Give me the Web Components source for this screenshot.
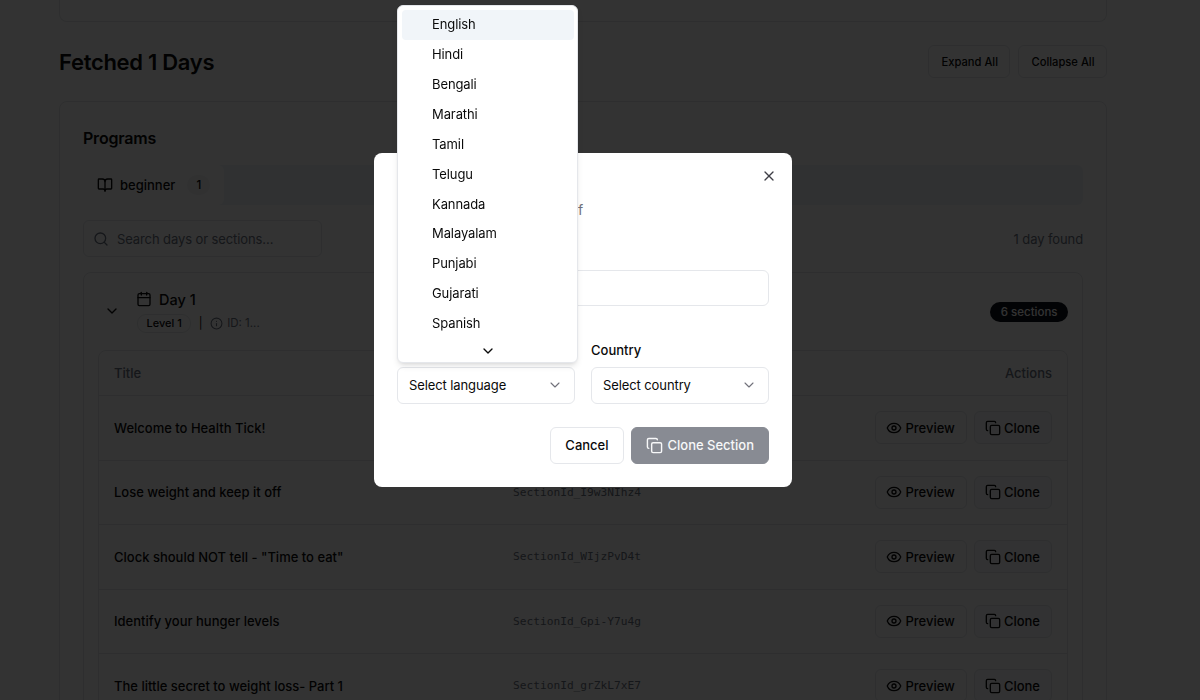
<!DOCTYPE html>
<html>
<head>
<meta charset="utf-8">
<title>Fetched Days</title>
<style>
  html, body { margin: 0; height: 100%; overflow: hidden; background: #fff; }
  body { font-family: Inter, "Liberation Sans", sans-serif; color: #0a0a0a; font-size: 13px; }
</style>
</head>
<body>
<days-page>
  <section-row title="Welcome to Health Tick!"></section-row>
  <section-row title="Lose weight and keep it off" section="SectionId_I9w3NIhz4"></section-row>
  <section-row title='Clock should NOT tell - "Time to eat"' section="SectionId_WIjzPvD4t"></section-row>
  <section-row title="Identify your hunger levels" section="SectionId_Gpi-Y7u4g"></section-row>
  <section-row title="The little secret to weight loss- Part 1" section="SectionId_grZkL7xE7"></section-row>
</days-page>
<clone-dialog></clone-dialog>

<script>
// lucide style paths, 24 box
const ICONS = {
  book: '<path d="M12 7v14"/><path d="M3 18a1 1 0 0 1-1-1V4a1 1 0 0 1 1-1h5a4 4 0 0 1 4 4 4 4 0 0 1 4-4h5a1 1 0 0 1 1 1v13a1 1 0 0 1-1 1h-6a3 3 0 0 0-3 3 3 3 0 0 0-3-3z"/>',
  search: '<circle cx="11" cy="11" r="8"/><path d="m21 21-4.3-4.3"/>',
  calendar: '<path d="M8 2v4"/><path d="M16 2v4"/><rect x="3" y="4" width="18" height="18" rx="2"/><path d="M3 10h18"/>',
  chevron: '<path d="m6 9 6 6 6-6"/>',
  info: '<circle cx="12" cy="12" r="10"/><path d="M12 16v-4"/><path d="M12 8h.01"/>',
  eye: '<path d="M2.062 12.348a1 1 0 0 1 0-.696 10.75 10.75 0 0 1 19.876 0 1 1 0 0 1 0 .696 10.75 10.75 0 0 1-19.876 0"/><circle cx="12" cy="12" r="3"/>',
  copy: '<rect x="8" y="8" width="14" height="14" rx="2"/><path d="M4 16c-1.1 0-2-.9-2-2V4c0-1.1.9-2 2-2h10c1.1 0 2 .9 2 2"/>',
  x: '<path d="M18 6 6 18"/><path d="m6 6 12 12"/>'
};

class UiIcon extends HTMLElement {
  connectedCallback() {
    const size = this.getAttribute('size') || 16;
    const sw = this.getAttribute('stroke') || 2;
    this.attachShadow({mode: 'open'}).innerHTML = `
      <style>:host { display: inline-flex; flex: none; } svg { display: block; }</style>
      <svg width="${size}" height="${size}" viewBox="0 0 24 24" fill="none" stroke="currentColor"
        stroke-width="${sw}" stroke-linecap="round" stroke-linejoin="round">${ICONS[this.getAttribute('name')]}</svg>`;
  }
}
customElements.define('ui-icon', UiIcon);

class UiButton extends HTMLElement {
  constructor() {
    super();
    this.attachShadow({mode: 'open'}).innerHTML = `
      <style>
        :host { display: inline-flex; align-items: center; justify-content: center; gap: var(--gap, 3px);
          box-sizing: border-box; height: var(--h, 33px); padding: 0 var(--pr, 11px) var(--pb, 0) var(--pl, 10px); border: 1px solid #e5e7eb;
          border-radius: 6px; background: #fff; font-size: var(--fs, 13px); font-weight: 500; color: #0a0a0a; white-space: nowrap; }
        :host([tint]) { background: #f8fafc; }
        :host([solid]) { background: #888b93; border-color: #888b93; color: #f7f8f9; }
      </style>
      <slot></slot>`;
  }
}
customElements.define('ui-button', UiButton);

class SectionRow extends HTMLElement {
  connectedCallback() {
    this.attachShadow({mode: 'open'}).innerHTML = `
      <style>
        :host { display: grid; grid-template-columns: 399px 1fr auto; align-items: center; box-sizing: border-box;
          height: 64.5px; padding: 0 15px; border-top: 1px solid #e5e7eb; }
        .title { font-size: 13px; font-weight: 500; }
        .id { font-family: "DejaVu Sans Mono", "Liberation Mono", monospace; font-size: 11.2px; color: #6b7280; }
        .actions { display: flex; gap: 7px; }
      </style>
      <div class="title"></div>
      <div class="id"></div>
      <div class="actions">
        <ui-button><ui-icon name="eye"></ui-icon>Preview</ui-button>
        <ui-button tint><ui-icon name="copy"></ui-icon>Clone</ui-button>
      </div>`;
    this.shadowRoot.querySelector('.title').textContent = this.getAttribute('title');
    this.shadowRoot.querySelector('.id').textContent = this.getAttribute('section') || '';
  }
}
customElements.define('section-row', SectionRow);

class DaysPage extends HTMLElement {
  constructor() {
    super();
    this.attachShadow({mode: 'open'}).innerHTML = `
      <style>
        :host { display: block; padding: 0 93px 0 59px; }
        .top-card { height: 21px; border: 1px solid #e5e7eb; border-top: 0; border-radius: 0 0 8px 8px; }
        .head { display: flex; justify-content: space-between; align-items: center; margin-top: 23px; height: 33px; }
        h1 { margin: 1px 0 0; font-size: 22px; font-weight: 600; letter-spacing: -0.3px; }
        .head-btns { display: flex; gap: 8px; --fs: 11.2px; --pl: 12px; --pr: 11.5px; }
        .card { margin-top: 23px; border: 1px solid #e5e7eb; border-radius: 8px; padding: 24px 23px; height: 800px; box-sizing: border-box; }
        h2 { margin: 0; font-size: 16px; line-height: 24px; font-weight: 600; letter-spacing: -0.2px; }
        .tabs { margin-top: 15px; height: 40px; background: #f1f5f9; border-radius: 6px; display: flex; }
        .tab { display: flex; align-items: center; gap: 7px; width: 141px; box-sizing: border-box; padding-left: 14px;
          background: #fff; border-radius: 6px; font-weight: 500; }
        .count { margin-left: 5px; width: 23px; height: 20px; display: flex; align-items: center; justify-content: center;
          background: #f3f4f6; border-radius: 10px; font-size: 11.5px; }
        .filter { margin-top: 15px; display: flex; justify-content: space-between; align-items: center; letter-spacing: -0.1px; }
        .search { display: flex; align-items: center; gap: 8px; width: 239px; height: 37px; box-sizing: border-box; padding-left: 9px;
          border: 1px solid #e5e7eb; border-radius: 6px; color: #6b7280; }
        .found { color: #6b7280; }
        .day { margin-top: 15px; border: 1px solid #e5e7eb; border-radius: 8px; padding: 0 14px; }
        .day-head { display: flex; align-items: center; height: 77px; }
        .toggle { width: 39px; padding-left: 6px; box-sizing: border-box; margin-top: 1px; }
        .day-info { flex: 1; }
        .day-title { display: flex; align-items: center; gap: 7px; font-size: 14.5px; font-weight: 500; }
        .day-title ui-icon { margin-left: -1px; }
        .meta { display: flex; align-items: center; gap: 7.5px; margin-top: 6px; font-size: 11.5px; color: #6b7280; }
        .level { padding: 0 8.5px; height: 17px; line-height: 17px; border: 1px solid #e5e7eb; border-radius: 9px; color: #0a0a0a; font-weight: 500; font-size: 11px; }
        .sep { color: #0a0a0a; }
        .id { display: flex; align-items: center; gap: 4px; }
        .sections { background: #0b0f19; color: #fff; font-size: 11.5px; font-weight: 500; height: 20px; line-height: 20px;
          padding: 0 10.5px; border-radius: 10px; margin-top: 1px; }
        .table { border: 1px solid #e5e7eb; border-radius: 8px; }
        .thead { display: flex; justify-content: space-between; align-items: center; height: 44px; padding: 0 15px; color: #6b7280; font-weight: 500; }
      </style>
      <div class="top-card"></div>
      <div class="head">
        <h1>Fetched 1 Days</h1>
        <div class="head-btns"><ui-button>Expand All</ui-button><ui-button>Collapse All</ui-button></div>
      </div>
      <div class="card">
        <h2>Programs</h2>
        <div class="tabs">
          <div class="tab"><ui-icon name="book"></ui-icon>beginner<span class="count">1</span></div>
        </div>
        <div class="filter">
          <div class="search"><ui-icon name="search"></ui-icon>Search days or sections...</div>
          <div class="found">1 day found</div>
        </div>
        <div class="day">
          <div class="day-head">
            <div class="toggle"><ui-icon name="chevron"></ui-icon></div>
            <div class="day-info">
              <div class="day-title"><ui-icon name="calendar"></ui-icon>Day 1</div>
              <div class="meta">
                <span class="level">Level 1</span><span class="sep">|</span>
                <span class="id"><ui-icon name="info" size="13"></ui-icon>ID: 1...</span>
              </div>
            </div>
            <div class="sections">6 sections</div>
          </div>
          <div class="table">
            <div class="thead"><span>Title</span><span>Actions</span></div>
            <slot></slot>
          </div>
        </div>
      </div>`;
  }
}
customElements.define('days-page', DaysPage);

class LanguageMenu extends HTMLElement {
  constructor() {
    super();
    const langs = ['English', 'Hindi', 'Bengali', 'Marathi', 'Tamil', 'Telugu', 'Kannada', 'Malayalam', 'Punjabi', 'Gujarati', 'Spanish'];
    this.attachShadow({mode: 'open'}).innerHTML = `
      <style>
        :host { position: absolute; left: -1px; bottom: calc(100% + 5px); width: 181px; box-sizing: border-box; padding: 4px 3px 0 4px;
          background: #fff; border: 1px solid #e5e7eb; border-radius: 6px; box-shadow: 0 4px 6px -1px rgba(0,0,0,.1), 0 2px 4px -2px rgba(0,0,0,.1); z-index: 2; }
        .item { height: 29.9px; line-height: 29.9px; padding-left: 30px; border-radius: 4px; color: #0a0a0a; letter-spacing: -0.1px; }
        .item.on { background: #f1f5f9; }
        .more { height: 23px; display: flex; justify-content: center; align-items: center; }
      </style>
      ${langs.map((l, i) => `<div class="item${i ? '' : ' on'}">${l}</div>`).join('')}
      <div class="more"><ui-icon name="chevron"></ui-icon></div>`;
  }
}
customElements.define('language-menu', LanguageMenu);

class SelectField extends HTMLElement {
  connectedCallback() {
    this.attachShadow({mode: 'open'}).innerHTML = `
      <style>
        :host { display: block; position: relative; }
        label { display: block; height: 18px; line-height: 18px; font-weight: 500; margin-bottom: 8px; }
        .box { display: flex; justify-content: space-between; align-items: center; box-sizing: border-box; height: 37px; padding: 0 11px 1px;
          border: 1px solid #e5e7eb; border-radius: 6px; position: relative; letter-spacing: -0.1px; }
        ui-icon { color: #71717a; }
      </style>
      <label>${this.getAttribute('label') || ''}</label>
      <div class="box"><span>${this.getAttribute('placeholder')}</span><ui-icon name="chevron" stroke="1.6"></ui-icon><slot></slot></div>`;
  }
}
customElements.define('select-field', SelectField);

class CloneDialog extends HTMLElement {
  constructor() {
    super();
    // title and labels sit under the open menu, only the tail of the description shows
    this.attachShadow({mode: 'open'}).innerHTML = `
      <style>
        .overlay { position: fixed; inset: 0; background: rgba(0,0,0,.8); }
        .dialog { position: fixed; left: 374px; top: 153px; width: 418px; height: 334px; box-sizing: border-box; padding: 47px 23px 23px;
          background: #fff; border-radius: 8px; }
        .close { position: absolute; right: 15px; top: 15px; color: #3f3f46; }
        .desc { height: 20px; line-height: 20px; padding-left: 181px; font-size: 14px; color: #71717a; }
        .input { margin-top: 50px; height: 36px; box-sizing: border-box; border: 1px solid #e5e7eb; border-radius: 6px; }
        .grid { display: grid; grid-template-columns: 1fr 1fr; gap: 16px; margin-top: 35px; }
        .foot { display: flex; justify-content: flex-end; gap: 7px; margin-top: 23px; --h: 37px; --gap: 5px; --pl: 14px; --pr: 14px; --pb: 1px; }
      </style>
      <div class="overlay"></div>
      <div class="dialog">
        <ui-icon class="close" name="x"></ui-icon>
        <div class="desc">f</div>
        <div class="input"></div>
        <div class="grid">
          <select-field placeholder="Select language"><language-menu></language-menu></select-field>
          <select-field label="Country" placeholder="Select country"></select-field>
        </div>
        <div class="foot">
          <ui-button>Cancel</ui-button>
          <ui-button solid><ui-icon name="copy" size="17"></ui-icon>Clone Section</ui-button>
        </div>
      </div>`;
  }
}
customElements.define('clone-dialog', CloneDialog);
</script>
</body>
</html>
